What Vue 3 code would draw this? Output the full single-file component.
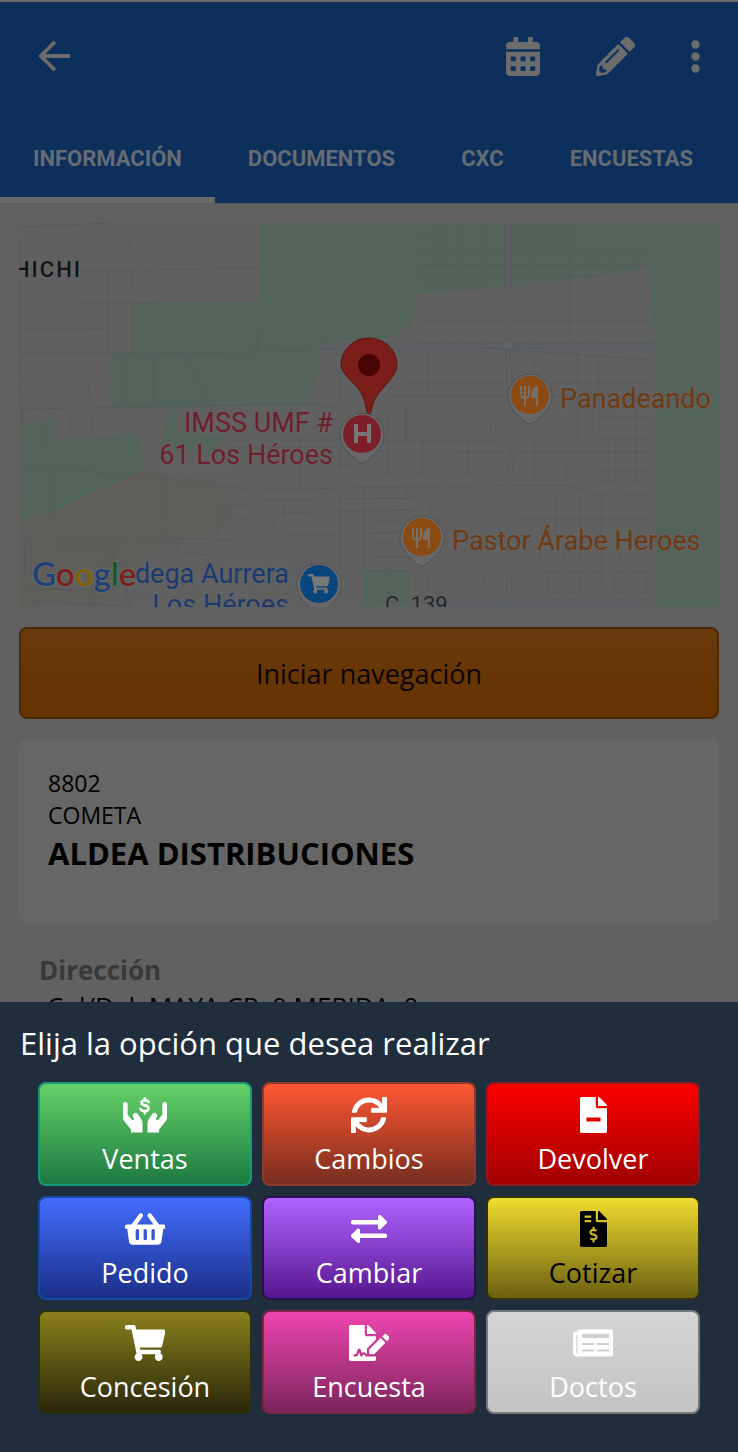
<script setup>
const tabs = [
  { label: 'INFORMACIÓN', active: true },
  { label: 'DOCUMENTOS' },
  { label: 'CXC' },
  { label: 'ENCUESTAS' },
]

const actions = [
  { name: 'Ventas', tone: 'green', icon: 'hands' },
  { name: 'Cambios', tone: 'coral', icon: 'sync' },
  { name: 'Devolver', tone: 'red', icon: 'fileMinus' },
  { name: 'Pedido', tone: 'blue', icon: 'basket' },
  { name: 'Cambiar', tone: 'purple', icon: 'exchange' },
  { name: 'Cotizar', tone: 'yellow', icon: 'fileDollar' },
  { name: 'Concesión', tone: 'olive', icon: 'cart' },
  { name: 'Encuesta', tone: 'pink', icon: 'signature' },
  { name: 'Doctos', tone: 'silver', icon: 'news' },
]

const cart = 'M528.12 301.319l47.273-208C578.806 78.301 567.391 64 551.99 64H159.208l-9.166-44.81C147.758 8.021 137.93 0 126.529 0H24C10.745 0 0 10.745 0 24v16c0 13.255 10.745 24 24 24h69.883l70.248 343.435C147.325 417.1 136 435.222 136 456c0 30.928 25.072 56 56 56s56-25.072 56-56c0-15.674-6.447-29.835-16.824-40h209.647C430.447 426.165 424 440.326 424 456c0 30.928 25.072 56 56 56s56-25.072 56-56c0-22.172-12.888-41.332-31.579-50.405l5.517-24.276c3.413-15.018-8.002-29.319-23.403-29.319H218.117l-6.545-32h293.145c11.206 0 20.92-7.754 23.403-18.681z'

const icons = {
  sync: { w: 512, d: 'M440.65 12.57l4 82.77A247.16 247.16 0 0 0 255.83 8C134.73 8 33.91 94.92 12.29 209.82A12 12 0 0 0 24.09 224h49.05a12 12 0 0 0 11.67-9.26 175.91 175.91 0 0 1 317-56.94l-101.46-4.86a12 12 0 0 0-12.57 12v47.41a12 12 0 0 0 12 12H500a12 12 0 0 0 12-12V12a12 12 0 0 0-12-12h-47.37a12 12 0 0 0-11.98 12.57zM255.83 432a175.61 175.61 0 0 1-146-77.8l101.8 4.87a12 12 0 0 0 12.57-12v-47.4a12 12 0 0 0-12-12H12a12 12 0 0 0-12 12V500a12 12 0 0 0 12 12h47.35a12 12 0 0 0 12-12.6l-4.15-82.57A247.17 247.17 0 0 0 255.83 504c121.11 0 221.93-86.92 243.55-201.82a12 12 0 0 0-11.8-14.18h-49.05a12 12 0 0 0-11.67 9.26A175.86 175.86 0 0 1 255.83 432z' },
  fileMinus: { w: 384, d: 'M377 105L279.1 7c-4.5-4.5-10.6-7-17-7H256v128h128v-6.1c0-6.3-2.5-12.4-7-16.9zM224 136V0H24C10.7 0 0 10.7 0 24v464c0 13.3 10.7 24 24 24h336c13.3 0 24-10.7 24-24V160H248c-13.2 0-24-10.8-24-24zM292 344c0 2-2 4-4 4H96c-2 0-4-2-4-4v-48c0-2 2-4 4-4h192c2 0 4 2 4 4z' },
  basket: { w: 576, d: 'M576 216v16c0 13.255-10.745 24-24 24h-8l-26.113 182.788C514.509 462.435 494.257 480 470.37 480H105.63c-23.887 0-44.139-17.565-47.518-41.212L32 256h-8c-13.255 0-24-10.745-24-24v-16c0-13.255 10.745-24 24-24h67.341l106.78-146.821c10.395-14.292 30.407-17.453 44.701-7.058 14.293 10.395 17.453 30.408 7.058 44.701L170.477 192h235.046L326.12 82.821c-10.395-14.292-7.234-34.306 7.059-44.701 14.291-10.395 34.306-7.235 44.701 7.058L484.659 192H552c13.255 0 24 10.745 24 24zM312 392V280c0-13.255-10.745-24-24-24s-24 10.745-24 24v112c0 13.255 10.745 24 24 24s24-10.745 24-24zm112 0V280c0-13.255-10.745-24-24-24s-24 10.745-24 24v112c0 13.255 10.745 24 24 24s24-10.745 24-24zm-224 0V280c0-13.255-10.745-24-24-24s-24 10.745-24 24v112c0 13.255 10.745 24 24 24s24-10.745 24-24z' },
  exchange: { w: 512, d: 'M0 168v-16c0-13.255 10.745-24 24-24h360V80c0-21.367 25.899-32.042 40.971-16.971l80 80c9.372 9.373 9.372 24.569 0 33.941l-80 80C409.956 271.982 384 261.456 384 240v-48H24c-13.255 0-24-10.745-24-24zm488 152H128v-48c0-21.314-25.862-32.08-40.971-16.971l-80 80c-9.372 9.373-9.372 24.569 0 33.941l80 80C102.057 463.997 128 453.437 128 432v-48h360c13.255 0 24-10.745 24-24v-16c0-13.255-10.745-24-24-24z' },
  fileDollar: { w: 384, d: 'M377 105L279.1 7c-4.5-4.5-10.6-7-17-7H256v128h128v-6.1c0-6.3-2.5-12.4-7-16.9zm-153 31V0H24C10.7 0 0 10.7 0 24v464c0 13.3 10.7 24 24 24h336c13.3 0 24-10.7 24-24V160H248c-13.2 0-24-10.8-24-24zM64 72c0-4.42 3.58-8 8-8h80c4.42 0 8 3.58 8 8v16c0 4.42-3.58 8-8 8H72c-4.42 0-8-3.58-8-8V72zm0 80v-16c0-4.42 3.58-8 8-8h80c4.42 0 8 3.58 8 8v16c0 4.42-3.58 8-8 8H72c-4.42 0-8-3.58-8-8zm144 263.88V440c0 4.42-3.58 8-8 8h-16c-4.42 0-8-3.58-8-8v-24.29c-11.29-.58-22.27-4.52-31.37-11.35-3.9-2.93-4.1-8.77-.57-12.14l11.75-11.21c2.77-2.64 6.89-2.76 10.13-.73 3.87 2.42 8.26 3.72 12.82 3.72h28.11c6.5 0 11.8-5.92 11.8-13.19 0-5.95-3.61-11.19-8.77-12.73l-45-13.5c-18.59-5.58-31.58-23.42-31.58-43.39 0-24.52 19.05-44.44 42.67-45.07V232c0-4.42 3.58-8 8-8h16c4.42 0 8 3.58 8 8v24.29c11.29.58 22.27 4.51 31.37 11.35 3.9 2.93 4.1 8.77.57 12.14l-11.75 11.21c-2.77 2.64-6.89 2.76-10.13.73-3.87-2.43-8.26-3.72-12.82-3.72h-28.11c-6.5 0-11.8 5.92-11.8 13.19 0 5.95 3.61 11.19 8.77 12.73l45 13.5c18.59 5.58 31.58 23.42 31.58 43.39 0 24.53-19.05 44.44-42.67 45.07z' },
  cart: { w: 576, d: cart },
  signature: { w: 576, d: 'M218.17 424.14c-2.95-5.92-8.09-6.52-10.17-6.52s-7.22.59-10.02 6.19l-7.67 15.34c-6.37 12.78-25.03 11.37-29.48-2.09L144 386.59l-10.61 31.88c-5.89 17.66-22.38 29.53-41 29.53H80c-8.84 0-16-7.16-16-16s7.16-16 16-16h12.39c4.83 0 9.11-3.08 10.64-7.66l18.19-54.64c3.3-9.81 12.44-16.41 22.78-16.41s19.48 6.59 22.77 16.41l13.88 41.64c19.75-16.19 54.06-9.7 66 14.16 1.89 3.78 5.49 5.95 9.36 6.26v-82.12l128-127.09V160H248c-13.2 0-24-10.8-24-24V0H24C10.7 0 0 10.7 0 24v464c0 13.3 10.7 24 24 24h336c13.3 0 24-10.7 24-24v-40l-128-.11c-16.12-.31-30.58-9.28-37.83-23.75zM384 121.9c0-6.3-2.5-12.4-7-16.9L279.1 7c-4.5-4.5-10.6-7-17-7H256v128h128v-6.1zm-96 225.06V416h68.99l161.68-162.78-67.88-67.88L288 346.96zm280.54-179.63l-31.87-31.87c-9.94-9.94-26.07-9.94-36.01 0l-27.25 27.25 67.88 67.88 27.25-27.25c9.95-9.94 9.95-26.07 0-36.01z' },
  news: { w: 576, d: 'M552 64H88c-13.255 0-24 10.745-24 24v8H24c-13.255 0-24 10.745-24 24v272c0 30.928 25.072 56 56 56h472c26.51 0 48-21.49 48-48V88c0-13.255-10.745-24-24-24zM56 410a10 10 0 0 1-8-10V136h16v264a10 10 0 0 1-8 10zM140 126h364q12 0 12 12v34q0 12-12 12H140q-12 0-12-12v-34q0-12 12-12zM138 256h152q8 0 8 8v12q0 8-8 8H138q-8 0-8-8v-12q0-8 8-8zM346 256h162q8 0 8 8v12q0 8-8 8H346q-8 0-8-8v-12q0-8 8-8zM138 348h152q8 0 8 8v12q0 8-8 8H138q-8 0-8-8v-12q0-8 8-8zM346 348h162q8 0 8 8v12q0 8-8 8H346q-8 0-8-8v-12q0-8 8-8z' },
}

const greens = [
  'M259 223H719V607H656V386L651 288L646 268L600 276L505 286L418 295L411 326L390 338L345 340L323 345L320 366L309 402L300 404L132 408H110V352H132V302H259Z',
  'M19 424L54 420V440L140 434L143 470L88 495L55 512L19 520Z',
  'M168 410H178V432L228 437L210 452H160Z',
  'M364 570H409V607H364Z',
]

const roads = [
  'M19 227L110 223H145M119 224L141 269M82 271L259 268M20 240V352M20 294H75L80 303H157M20 330L120 328M20 353L130 354L310 351M20 378H108M53 295V352M67 296V352M82 303V352M82 271V293M108 271V353M132 271V292M132 304V353M34 280V294M240 271V300M257 331V351M163 225V240M230 225V256M88 381L91 407M42 391V408',
  'M122 354V407M127 354V407M153 354V407M183 354L210 407M20 409L320 404M20 352L25 577M43 410V448M71 410V437M92 410V437M114 410V422M23 466L150 477L247 489M50 469V521M152 455V475M162 479V521M232 486V546M56 530V546H112M56 537H120M120 546L97 571M125 533L112 560L90 607M130 535L165 543H210M171 536V551L210 555M165 530L165 566H220M30 588L110 591M32 601L125 606M32 570V607M120 561L130 607M213 508L247 505M217 518H245M217 519V538M232 510L252 495M236 526L263 504M247 544L270 520M258 550L277 535M272 553L283 540M172 538L234 540L270 562M178 538V560M192 540V560M208 540V562',
  'M418 235H440M416 253H651M418 265H651M418 276H651M418 288H651M420 299H651M420 310H651M420 321H651M420 332H651M420 343H651M395 346L654 344M430 344L654 360M420 362H652M408 372H652M408 383H652M390 395H654M380 397H652M440 223V344M462 223V344M485 223V344M534 223V344M569 252V342M592 252V342M613 252V330M635 252V330M552 227V248M574 225V248M508 230H574M508 240H574M428 350V395M450 361V395M405 361V440M552 350V360M577 350V440M599 361V430M535 361V373',
  'M320 349H340M323 355H342M323 370H340M323 382H345M323 394H350M340 367V404M320 407H350M230 440L344 440M232 448L350 447M240 456H356M245 465H356M250 475H356M258 490L430 486M265 500L410 498M280 513L410 510M284 523H410M284 535L410 533M300 547H410M290 557H410M300 438V488M325 455V476M340 440V476M284 504V523M312 490V570M340 490V570M364 486V570',
  'M380 420H500M380 441H500M376 451L654 452M373 464H590M370 474H590M370 487L568 485L592 495H654M375 498H505M375 510H505M375 520H505M375 532H505M375 543H505M375 557H505M388 410V476M406 410V440M430 410V440M423 440V474M445 410V485M468 440V474M490 412L491 440L500 452M535 440V485M555 410V438M571 440V454M566 465L567 482L592 495M592 410V495M608 410V483M616 440V490M636 410V482M600 417H652M600 427H654M600 439H654M600 461H654M600 471H655M600 482H658M520 498H655M520 508H655M520 519H655M389 500V570M407 488V500M431 498V556M454 498V525M490 498V525M538 497V520M556 497V545M580 497V535M601 497V590M638 508V535M368 571H654M416 572V597M428 572V595M440 572V595M461 572V590M472 572V590M484 572V590M548 572H560V593H548ZM570 572H580V593H570ZM593 572H600M615 572H626V593H615ZM637 572H647V593H637ZM380 602H650M530 560V550M540 560V550M552 560V550M564 560V550M580 560V550M590 560V550M620 560V550M645 560V550',
]

const avenues = ['M508 223V346L509 382L517 424L510 470V571L508 607', 'M240 465L252 489L300 575L308 590', 'M320 346H656', 'M440 602H650']

const pois = [
  { x: 530, y: 395, kind: 'food' },
  { x: 422, y: 537, kind: 'food' },
  { x: 362, y: 434, kind: 'hospital' },
  { x: 319, y: 584, kind: 'shop' },
]
</script>

<template>
  <div class="screen">
    <header class="bar">
      <div class="tools">
        <button class="tool" type="button" aria-label="Volver">
          <svg width="32" height="32" viewBox="0 0 34 34" fill="none" stroke="currentColor" stroke-width="4"><path d="M34 17H4M18 2L3 17L18 32" /></svg>
        </button>
        <div class="right">
          <button class="tool" type="button" aria-label="Calendario">
            <svg width="34" height="39" viewBox="0 0 448 512" fill="currentColor"><path fill-rule="evenodd" d="M0 464c0 26.500 21.500 48 48 48h352c26.500 0 48-21.500 48-48V192H0zM448 160H0v-48c0-26.500 21.500-48 48-48h48V12q0-12 12-12h40q12 0 12 12v52h128V12q0-12 12-12h40q12 0 12 12v52h48c26.500 0 48 21.500 48 48zM76 256h40q12 0 12 12v40q0 12-12 12H76q-12 0-12-12v-40q0-12 12-12zM204 256h40q12 0 12 12v40q0 12-12 12h-40q-12 0-12-12v-40q0-12 12-12zM332 256h40q12 0 12 12v40q0 12-12 12h-40q-12 0-12-12v-40q0-12 12-12zM76 384h40q12 0 12 12v40q0 12-12 12H76q-12 0-12-12v-40q0-12 12-12zM204 384h40q12 0 12 12v40q0 12-12 12h-40q-12 0-12-12v-40q0-12 12-12zM332 384h40q12 0 12 12v40q0 12-12 12h-40q-12 0-12-12v-40q0-12 12-12z" /></svg>
          </button>
          <button class="tool" type="button" aria-label="Editar">
            <svg width="39" height="39" viewBox="0 0 512 512" fill="currentColor"><path d="M497.9 142.1l-46.1 46.1c-4.7 4.7-12.3 4.7-17 0l-111-111c-4.7-4.7-4.7-12.3 0-17l46.1-46.1c18.7-18.7 49.1-18.7 67.9 0l60.1 60.1c18.8 18.7 18.8 49.1 0 67.9zM284.2 99.8L21.6 362.4.4 483.9c-2.9 16.4 11.4 30.6 27.8 27.8l121.5-21.3 262.6-262.6c4.7-4.7 4.7-12.3 0-17l-111-111c-4.8-4.7-12.400-4.700-17.100 0zM124.100 339.900c-5.500-5.500-5.500-14.300 0-19.800l154-154c5.500-5.500 14.300-5.500 19.800 0s5.500 14.300 0 19.800l-154 154c-5.500 5.500-14.300 5.500-19.800 0zM88 424h48v36.300l-64.500 11.300-31.100-31.100L51.700 376H88v48z" /></svg>
          </button>
          <button class="tool" type="button" aria-label="Más opciones">
            <svg width="9" height="33" viewBox="0 0 9 33" fill="currentColor"><circle cx="4.500" cy="4.500" r="4.200" /><circle cx="4.500" cy="16.500" r="4.200" /><circle cx="4.500" cy="28.500" r="4.200" /></svg>
          </button>
        </div>
      </div>
      <nav class="tabs">
        <a v-for="t in tabs" :key="t.label" href="#" :class="['tab', { active: t.active }]">{{ t.label }}</a>
      </nav>
    </header>

    <main class="content">
      <svg class="map" viewBox="19 223 700 384" role="img" aria-label="Mapa">
        <rect x="19" y="223" width="700" height="384" fill="#606061" />
        <path d="M143 470L60 510L19 520V607H100L170 540L232 530V500L215 480Z" fill="#605e5a" />
        <path v-for="d in greens" :key="d" :d="d" fill="#53645a" />
        <path v-for="d in roads" :key="d" :d="d" fill="none" stroke="#565a5f" stroke-width="1" />
        <path v-for="d in avenues" :key="d" :d="d" fill="none" stroke="#565b60" stroke-width="5" />
        <path v-for="d in avenues" :key="d" :d="d" fill="none" stroke="#5e6163" stroke-width="3" />
        <circle cx="508" cy="345" r="5" fill="#626465" stroke="#555a60" />
        <text x="82" y="277" class="label town" text-anchor="end">HICHI</text>
        <g class="label" text-anchor="end">
          <text x="333" y="432" class="rose">IMSS UMF #</text>
          <text x="333" y="464" class="rose">61 Los Héroes</text>
          <text x="289" y="583" class="azure">dega Aurrera</text>
          <text x="289" y="614" class="azure">Los Héroes</text>
        </g>
        <text x="560" y="408" class="label amber">Panadeando</text>
        <text x="452" y="550" class="label amber">Pastor Árabe Heroes</text>
        <text x="385" y="612" class="label street">C. 139</text>

        <g v-for="(p, i) in pois" :key="i" :transform="`translate(${p.x} ${p.y})`">
          <path d="M0 29Q-4 29 -8 24L-17 15A22 22 0 1 1 17 15L8 24Q4 29 0 29Z" fill="#686868" stroke="#505052" stroke-width="1" />
          <circle r="19" :class="p.kind" />
          <template v-if="p.kind === 'food'">
            <path d="M-9 -9V-1Q-9 3 -5 3Q-1 3 -1 -1V-9M-5 -9V11M7 11V-8Q2 -7 2 2H6" fill="none" stroke="#777068" stroke-width="2" />
            <path d="M8 -9Q1 -8 1 3H8Z" fill="#777068" />
          </template>
          <path v-else-if="p.kind === 'hospital'" d="M-6 -10V9M7 -10V9M-6 0H7" fill="none" stroke="#777" stroke-width="4" />
          <path v-else :d="cart" transform="translate(-11 -10) scale(.038)" fill="#777" />
        </g>

        <path d="M369 414Q367 414 366 407Q364 393 354 384Q341 371 341 365A28 27 0 0 1 397 365Q397 373 384 387Q374 397 372 407Q371 414 369 414Z" fill="#7b1d18" stroke="#57110e" stroke-width="1" />
        <circle cx="369" cy="365" r="11" fill="#480505" />
        <text x="32" y="586" class="google"><tspan class="g-blue">G</tspan><tspan class="g-red">o</tspan><tspan class="g-gold">o</tspan><tspan class="g-blue">g</tspan><tspan class="g-green">l</tspan><tspan class="g-red">e</tspan></text>
      </svg>

      <button class="navigate" type="button">Iniciar navegación</button>

      <section class="card">
        <p>8802</p>
        <p>COMETA</p>
        <h1>ALDEA DISTRIBUCIONES</h1>
      </section>

      <section class="address">
        <h2>Dirección</h2>
        <p>Col/Del. MAYA CP. 0 MERIDA, 0</p>
      </section>
    </main>

    <section class="sheet" role="dialog" aria-labelledby="sheet-title">
      <h2 id="sheet-title">Elija la opción que desea realizar</h2>
      <div class="grid">
        <button v-for="a in actions" :key="a.name" type="button" :class="['action', a.tone]">
          <svg v-if="a.icon === 'hands'" width="44" height="36" viewBox="0 0 133 108" fill="currentColor">
            <path id="hand" d="M0 21Q0 15 7 15T14 21V53L27 68Q32 71 34 66L30 59Q28 53 33 49Q39 45 44 50L55 66Q59 72 59 79V107H24V98L2 70Q0 67 0 63Z" />
            <use href="#hand" transform="translate(133 0) scale(-1 1)" />
            <path d="M78 15Q75 10 66 10Q56 10 56 18Q56 23 66 25Q77 27 77 34Q77 42 66 42Q56 42 53 36M66 3V10M66 42V49" fill="none" stroke="currentColor" stroke-width="8" stroke-linecap="round" />
          </svg>
          <svg v-else :width="icons[a.icon].w * 36 / 512" height="36" :viewBox="`0 0 ${icons[a.icon].w} 512`" fill="currentColor">
            <path fill-rule="evenodd" :d="icons[a.icon].d" />
          </svg>
          <span>{{ a.name }}</span>
        </button>
      </div>
    </section>
  </div>
</template>

<style>
body {
  background: #616161;
}
</style>

<style scoped>
.screen {
  min-height: 100vh;
  background: #616161;
  border-top: 2px solid #6a6a6a;
  box-sizing: border-box;
  font-family: "Open Sans", "Noto Sans", sans-serif;
  color: #000;
}
h1, h2, p {
  margin: 0;
}
button {
  font: inherit;
  cursor: pointer;
}
svg {
  display: block;
}
.bar {
  background: #0d2f5c;
  border-bottom: 1px solid #55595f;
}
.tools {
  display: flex;
  justify-content: space-between;
  align-items: center;
  height: 108px;
  padding: 0 38px;
}
.right {
  display: flex;
  align-items: center;
  gap: 56px;
}
.tool {
  padding: 0;
  border: 0;
  background: none;
  color: #6c6c6c;
}
.tabs {
  display: flex;
  height: 93px;
}
.tab {
  box-sizing: border-box;
  padding: 36px 33px 0;
  border-bottom: 6px solid transparent;
  font: 700 22px/26px Roboto, sans-serif;
  color: #666c73;
  text-decoration: none;
}
.tab.active {
  border-bottom-color: #6a6a6a;
}
.content {
  display: flex;
  flex-direction: column;
  gap: 20px;
  padding: 19px 19px 0;
}
.map {
  width: 100%;
  height: auto;
}
.label {
  font: 400 27px Roboto, sans-serif;
  paint-order: stroke;
  stroke: #626262;
  stroke-width: 3px;
}
.town {
  font-size: 22px;
  font-weight: 500;
  fill: #141414;
  letter-spacing: 2px;
}
.rose { fill: #6f1f2a; }
.azure { fill: #1b3a70; }
.amber { fill: #6f3a12; }
.street {
  font-size: 22px;
  fill: #22272e;
}
.food { fill: #8a4a12; }
.hospital { fill: #7c1f2b; }
.shop { fill: #08457c; }
.google {
  font: 600 33px Lato, sans-serif;
  paint-order: stroke;
  stroke: #686868;
  stroke-width: 2px;
}
.g-blue { fill: #1f3f78; }
.g-red { fill: #7a1f1a; }
.g-gold { fill: #806208; }
.g-green { fill: #155a2a; }
.navigate {
  height: 92px;
  border: 2px solid #4a2a08;
  border-radius: 8px;
  background: linear-gradient(#693a0c, #663200);
  color: #0c0400;
  font-size: 27px;
}
.card {
  padding: 28px 29px 48px;
  border-radius: 8px;
  background: #666;
}
.card p {
  font-size: 23px;
  line-height: 32px;
}
.card h1 {
  font-size: 31px;
  line-height: 44px;
}
.address {
  padding: 9px 20px;
}
.address h2 {
  font-size: 26px;
  line-height: 36px;
  color: #393939;
}
.address p {
  padding-left: 8px;
  font-size: 26px;
  line-height: 36px;
}
.sheet {
  position: fixed;
  inset: auto 0 0;
  padding: 19px 38px 38px;
  background: #1f2d3d;
}
.sheet h2 {
  margin: 0 -18px 17px;
  font-size: 31px;
  font-weight: 400;
  line-height: 44px;
  color: #fff;
}
.grid {
  display: grid;
  grid-template-columns: repeat(3, 1fr);
  gap: 10px;
}
.action {
  display: flex;
  flex-direction: column;
  align-items: center;
  gap: 8px;
  height: 104px;
  padding: 13px 0 0;
  border: 2px solid;
  border-radius: 8px;
  color: #fff;
  font-size: 27px;
  line-height: 36px;
}
.green { background: linear-gradient(#66d067, #1b7a41); border-color: #189a78; }
.coral { background: linear-gradient(#ff5733, #772d1e); border-color: #8f3a2c; }
.red { background: linear-gradient(#ff0000, #a00000); border-color: #8f1a1e; }
.blue { background: linear-gradient(#436dff, #1b2f88); border-color: #124aa8; }
.purple { background: linear-gradient(#b163ff, #55178f); border-color: #29104f; }
.yellow { background: linear-gradient(#f0dc30, #6b6010); border-color: #33320f; color: #000; }
.olive { background: linear-gradient(#89801c, #2b270a); border-color: #29300f; }
.pink { background: linear-gradient(#ee45b0, #7c255c); border-color: #7c2440; }
.silver { background: linear-gradient(#d6d5d5, #c4c2c2); border-color: #77797c; }
</style>
